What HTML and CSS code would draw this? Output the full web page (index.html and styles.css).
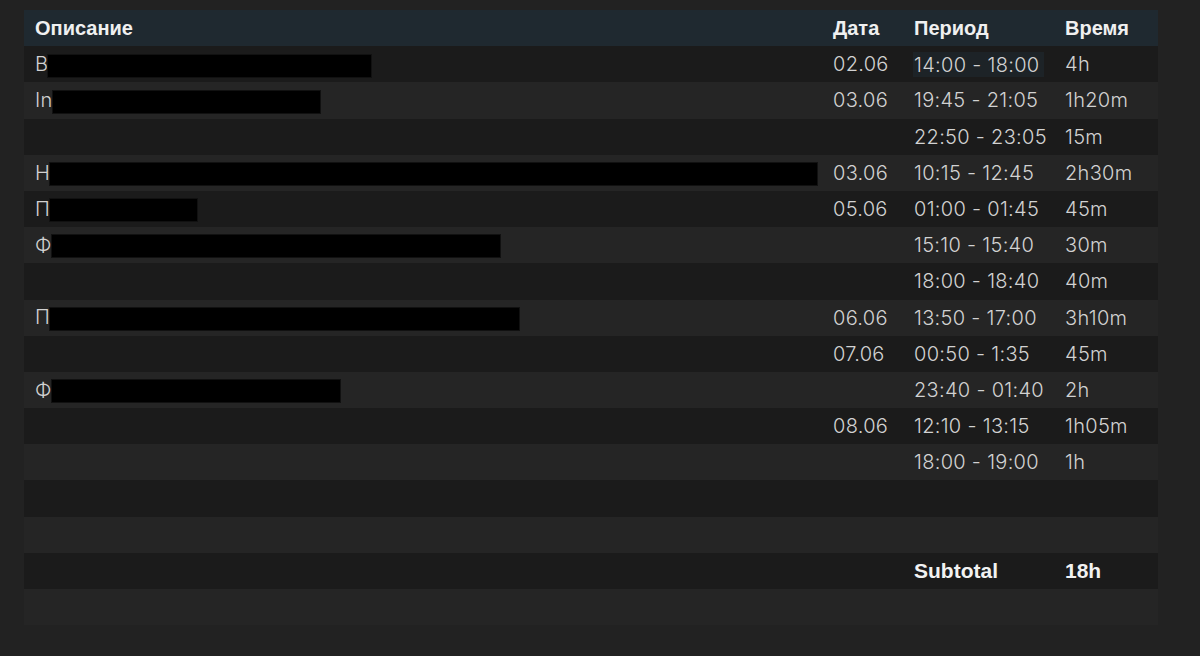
FILE: index.html
```html
<!DOCTYPE html>
<html lang="ru">
<head>
<meta charset="utf-8">
<title>Время</title>
<link rel="stylesheet" href="styles.css">
</head>
<body>
<table class="sheet">
  <colgroup>
    <col class="c-desc"><col class="c-date"><col class="c-period"><col class="c-time">
  </colgroup>
  <thead>
    <tr><th>Описание</th><th>Дата</th><th>Период</th><th>Время</th></tr>
  </thead>
  <tbody>
    <tr><td>В<span class="redact" style="width:323px"></span></td><td>02.06</td><td><span class="sel">14:00 - 18:00</span></td><td>4h</td></tr>
    <tr><td>In<span class="redact" style="width:267px"></span></td><td>03.06</td><td>19:45 - 21:05</td><td>1h20m</td></tr>
    <tr><td></td><td></td><td>22:50 - 23:05</td><td>15m</td></tr>
    <tr><td>Н<span class="redact" style="width:767px"></span></td><td>03.06</td><td>10:15 - 12:45</td><td>2h30m</td></tr>
    <tr><td>П<span class="redact" style="width:147px"></span></td><td>05.06</td><td>01:00 - 01:45</td><td>45m</td></tr>
    <tr><td>Ф<span class="redact" style="width:448px"></span></td><td></td><td>15:10 - 15:40</td><td>30m</td></tr>
    <tr><td></td><td></td><td>18:00 - 18:40</td><td>40m</td></tr>
    <tr><td>П<span class="redact" style="width:469px"></span></td><td>06.06</td><td>13:50 - 17:00</td><td>3h10m</td></tr>
    <tr><td></td><td>07.06</td><td>00:50 - 1:35</td><td>45m</td></tr>
    <tr><td>Ф<span class="redact" style="width:288px"></span></td><td></td><td>23:40 - 01:40</td><td>2h</td></tr>
    <tr><td></td><td>08.06</td><td>12:10 - 13:15</td><td>1h05m</td></tr>
    <tr><td></td><td></td><td>18:00 - 19:00</td><td>1h</td></tr>
    <tr><td></td><td></td><td></td><td></td></tr>
    <tr><td></td><td></td><td></td><td></td></tr>
    <tr class="total"><td></td><td></td><td>Subtotal</td><td>18h</td></tr>
    <tr><td></td><td></td><td></td><td></td></tr>
  </tbody>
</table>
</body>
</html>
```

FILE: styles.css
```css
html, body {
  margin: 0;
  background: #222222;
}
body {
  padding: 10px 42px 0 24px;
  font-family: Inter, "Noto Sans", sans-serif;
  color: #d2d2d2;
}
.sheet {
  width: 1134px;
  table-layout: fixed;
  border-collapse: collapse;
  border-spacing: 0;
}
.c-desc { width: 798px; }
.c-date { width: 81px; }
.c-period { width: 151px; }
.c-time { width: 104px; }
.sheet th, .sheet td {
  padding: 0 0 0 11px;
  height: 36.2px;
  text-align: left;
  vertical-align: middle;
  white-space: nowrap;
  overflow: hidden;
  font-size: 20px;
  line-height: 24px;
}
.sheet th {
  background: #1f2930;
  color: #f0f0f0;
  font-family: "Liberation Sans", Arial, sans-serif;
  font-weight: 700;
  font-size: 20px;
}
.sheet td {
  font-weight: 300;
  letter-spacing: 0.3px;
}
.sheet tbody tr:nth-child(odd) { background: #1b1b1b; }
.sheet tbody tr:nth-child(even) { background: #252525; }
.redact {
  display: inline-block;
  vertical-align: middle;
  height: 22px;
  margin-left: 0;
  background: #000;
  box-shadow: 0 0 0 1px #111;
}
.sel {
  display: inline-block;
  margin-left: -1px;
  padding: 1px 5px 0 1px;
  background: #1d2327;
}
.total td {
  font-family: "Liberation Sans", Arial, sans-serif;
  font-weight: 700;
  color: #f2f2f2;
  font-size: 21px;
  letter-spacing: 0;
}
```
